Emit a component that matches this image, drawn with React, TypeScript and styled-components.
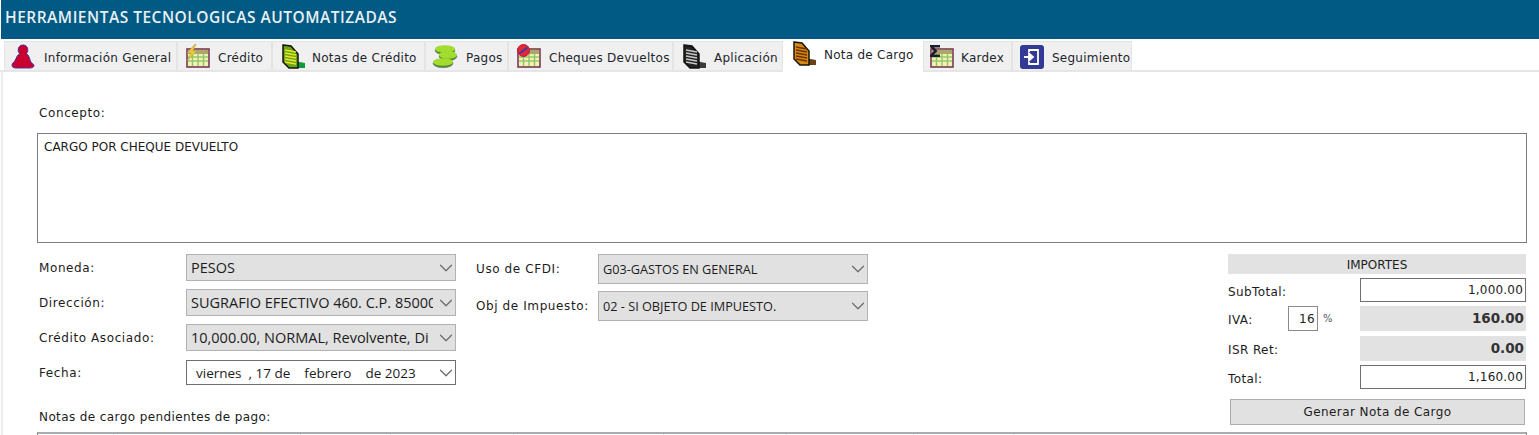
import React from "react";
import styled, { createGlobalStyle } from "styled-components";
import { ChevronDown } from "lucide-react";

const Global = createGlobalStyle`
  html, body { margin: 0; padding: 0; height: 435px; overflow: hidden; background: #fff; }
  #root { height: 435px; overflow: hidden; }
  * { box-sizing: border-box; }
`;

const FONT = `"DejaVu Sans", Tahoma, sans-serif`;

const Page = styled.div`
  width: 1539px;
  height: 435px;
  overflow: hidden;
  background: #fff;
  font-family: ${FONT};
  font-size: 12px;
  letter-spacing: 0.4px;
  color: #1c1c1c;
`;
const Header = styled.header`
  height: 39px;
  margin-left: 1px;
  background: #005a84;
  color: #e8f0f3;
  font-size: 15.5px;
  font-weight: 600;
  font-family: "Open Sans", sans-serif;
  letter-spacing: 0.5px;
  line-height: 35px;
  padding-left: 4px;
`;
const TabStrip = styled.nav`
  display: flex;
  align-items: flex-end;
  height: 33px;
  padding-left: 4px;
  border-bottom: 2px solid #e6e6e6;
`;
const Tab = styled.div<{ $w: number; $active?: boolean; $pad: number }>`
  display: flex;
  align-items: center;
  flex: none;
  width: ${(p) => p.$w}px;
  height: ${(p) => (p.$active ? 33 : 29)}px;
  margin-bottom: ${(p) => (p.$active ? -2 : 0)}px;
  padding-bottom: ${(p) => (p.$active ? 4 : 0)}px;
  padding-left: ${(p) => p.$pad}px;
  background: ${(p) => (p.$active ? "#fff" : "#f0f0f0")};
  border: 1px solid #e4e4e4;
  border-width: ${(p) => (p.$active ? "0" : "1px 1px 0 1px")};
  white-space: nowrap;
  color: #22262c;
  letter-spacing: 0.25px;
  svg { flex: none; }
`;
const TabLabel = styled.span<{ $gap: number }>`
  margin-left: ${(p) => p.$gap}px;
  padding-top: 3px;
`;
const Content = styled.main`
  height: 364px;
  margin-left: 1px;
  padding: 33px 12px 0 34px;
  border-left: 2px solid #ececec;
  margin-top: -1px;
`;
const FieldLabel = styled.label`
  display: block;
  padding-left: 2px;
  line-height: 18px;
  letter-spacing: 0.6px;
`;
const ConceptArea = styled.div`
  height: 110px;
  margin-top: 11px;
  padding: 5px 6px;
  border: 1px solid #7c7c7c;
  line-height: 16px;
  letter-spacing: 0;
`;
const Form = styled.section`
  display: flex;
  align-items: flex-start;
  margin-top: 11px;
  height: 178px;
`;
const LeftBlock = styled.div`
  display: flex;
  flex-direction: column;
  width: 831px;
`;
const Columns = styled.div`
  display: flex;
  gap: 18px;
`;
const Col = styled.div<{ $w: number }>`
  display: flex;
  flex-direction: column;
  width: ${(p) => p.$w}px;
`;
const FieldRow = styled.div<{ $h: number; $mt: number; $labelW: number }>`
  display: grid;
  grid-template-columns: ${(p) => p.$labelW}px 1fr;
  align-items: center;
  height: ${(p) => p.$h}px;
  margin-top: ${(p) => p.$mt}px;
`;
const Select = styled.div<{ $white?: boolean }>`
  display: flex;
  align-items: center;
  height: 100%;
  padding: 0 0 0 ${(p) => (p.$white ? 9 : 4)}px;
  background: ${(p) => (p.$white ? "#fff" : "#e1e1e1")};
  border: 1px solid ${(p) => (p.$white ? "#6f6f6f" : "#adb3b7")};
  min-width: 0;
  font-family: "Open Sans", sans-serif;
  letter-spacing: 0;
`;
const SelectText = styled.span<{ $size: number }>`
  flex: 1;
  min-width: 0;
  overflow: hidden;
  white-space: pre;
  font-size: ${(p) => p.$size}px;
`;
const Arrow = styled(ChevronDown)`
  flex: none;
  width: 22px;
  height: 22px;
  margin: 0 -2px 0 2px;
  color: #6a6a6a;
  stroke-width: 1.3;
`;
const NotesLabel = styled(FieldLabel)`
  margin-top: 23px;
  letter-spacing: 0.4px;
`;
const Totals = styled.aside`
  display: flex;
  flex-direction: column;
  width: 298px;
  margin-left: auto;
  margin-right: 1px;
`;
const TotalsTitle = styled.div`
  height: 20px;
  background: #e2e2e2;
  text-align: center;
  line-height: 22px;
  letter-spacing: 0;
`;
const TotalRow = styled.div<{ $mt: number; $h: number }>`
  display: flex;
  align-items: center;
  height: ${(p) => p.$h}px;
  margin-top: ${(p) => p.$mt}px;
`;
const TotalLabel = styled.span<{ $w?: number }>`
  width: ${(p) => p.$w ?? 132}px;
  padding-top: 3px;
`;
const Amount = styled.div<{ $bold?: boolean }>`
  width: 166px;
  height: 100%;
  margin-left: auto;
  padding: 0 2px 1px 0;
  display: flex;
  align-items: center;
  justify-content: flex-end;
  background: ${(p) => (p.$bold ? "#e2e2e2" : "#fff")};
  border: ${(p) => (p.$bold ? "none" : "1px solid #6f6f6f")};
  font-weight: ${(p) => (p.$bold ? 700 : 400)};
  font-size: ${(p) => (p.$bold ? 13.5 : 12)}px;
  letter-spacing: ${(p) => (p.$bold ? 0 : 0.2)}px;
  color: ${(p) => (p.$bold ? "#333" : "#1c1c1c")};
`;
const RateBox = styled.div`
  width: 30px;
  height: 100%;
  padding-right: 2px;
  display: flex;
  align-items: center;
  justify-content: flex-end;
  border: 1px solid #8a8a8a;
`;
const Percent = styled.span`
  margin-left: 5px;
  font-size: 10px;
  color: #555;
`;
const GenerateButton = styled.button`
  width: 295px;
  height: 26px;
  margin: 10px 0 0 2px;
  background: #e1e1e1;
  border: 1px solid #adadad;
  color: #1c1c1c;
  font: inherit;
  letter-spacing: 0.43px;
  padding: 0;
`;
const TableHead = styled.div`
  display: flex;
  height: 10px;
  width: 1490px;
  border-top: 2px solid #a9adb0;
  border-left: 1px solid #7c7c7c;
  border-right: 1px solid #7c7c7c;
`;
const HeadCell = styled.div<{ $w: number }>`
  width: ${(p) => p.$w}px;
  flex: none;
  border-right: 1px solid #dcdcdc;
`;

const I = ({ children, w = 25 }: { children: React.ReactNode; w?: number }) => (
  <svg width={w} height={25} viewBox={`0 0 ${w} 25`}>{children}</svg>
);

const Grid = () => (
  <>
    <rect x="2" y="5" width="22" height="18" fill="#f3f1b4" stroke="#7a3a55" strokeWidth="1.6" />
    <rect x="3" y="6" width="20" height="4" fill="#a9a868" />
    {[7.5, 13, 18.5].map((d) => <path key={d} d={`M${d} 10v12`} stroke="#8fc46a" strokeWidth="1.4" />)}
    {[13, 17].map((d) => <path key={d} d={`M3 ${d}h20`} stroke="#8fc46a" strokeWidth="1.4" />)}
  </>
);

const SlantDoc = ({ fill, line, foot }: { fill: string; line: string; foot: string }) => (
  <>
    <path d="M13 17l11 2v5H11z" fill={foot} />
    <path d="M2 1 10 2 17 10 17 24 8 24 2 18z" fill={fill} stroke="#15130f" strokeWidth="1.5" />
    {[6, 9, 12, 15, 18].map((y) => (
      <path key={y} d={`M4 ${y} 15 ${y + 2}`} stroke={line} strokeWidth="1.4" />
    ))}
  </>
);

const Coin = ({ cx, cy, rx }: { cx: number; cy: number; rx: number }) => (
  <>
    <ellipse cx={cx} cy={cy + 1.5} rx={rx} ry="4.2" fill="#4f8a1c" stroke="#7a7ab0" strokeWidth="0.6" />
    <ellipse cx={cx} cy={cy} rx={rx} ry="3.8" fill="#a2dc2e" />
  </>
);

const icons: Record<string, React.ReactNode> = {
  person: (
    <I>
      <path d="M12 1c3.200 0 4.800 2.300 4.800 5 0 2-.8 3-1.600 3.800 3.400 1 3.400 6 4.600 8.200 1.200 1.700 3.200 2 3.200 3.600 0 1.600-2 2.400-4 2.400H5c-3 0-4-1.200-4-3 0-1.800 2-2.500 3-4.500C5.500 14 6 11 8.800 9.800 8 9 7.200 8 7.200 6 7.200 3.300 8.800 1 12 1z" fill="#c9002f" stroke="#3d2a9a" strokeWidth="0.9" />
    </I>
  ),
  credit: (
    <I>
      <Grid />
      <path d="M10 0 2 9h4l-4 8 10-10H8l3-7z" fill="#f0c828" stroke="#9a9a80" strokeWidth="0.5" />
    </I>
  ),
  notes: (
    <I>
      <SlantDoc fill="#6aa518" line="#e7e62a" foot="#0f9a3c" />
    </I>
  ),
  pagos: (
    <I w={27}>
      <Coin cx={13} cy={5} rx={10} />
      <Coin cx={16} cy={11} rx={9} />
      <Coin cx={11} cy={18} rx={10} />
    </I>
  ),
  cheques: (
    <I>
      <Grid />
      <circle cx="7.500" cy="6.500" r="6" fill="#e02a3c" stroke="#c01a30" />
      <path d="M3.500 9.500 11.500 3.500" stroke="#3a3aa8" strokeWidth="1.800" />
    </I>
  ),
  aplicacion: (
    <I>
      <SlantDoc fill="#222" line="#c8c8c8" foot="#3c3c3c" />
    </I>
  ),
  cargo: (
    <I>
      <SlantDoc fill="#d88a10" line="#6a3208" foot="#6a4018" />
    </I>
  ),
  kardex: (
    <I>
      <Grid />
      <path d="M1 1h10v2.500H5l3.500 3.500L5 10.500h6V13H1v-2l4-4-4-4z" fill="#1c1c2c" />
    </I>
  ),
  seguimiento: (
    <I w={26}>
      <rect x="1" y="1" width="24" height="24" rx="3" fill="#333a96" />
      <path d="M10 8V6h9v14h-9v-2" fill="none" stroke="#fff" strokeWidth="1.800" />
      <path d="M5 13h8M10 9.500 14 13l-4 3.500z" fill="#fff" stroke="#fff" strokeWidth="1.800" />
    </I>
  ),
};

const tabs = [
  { t: "Información General", w: 173, i: "person", pad: 6, gap: 8 },
  { t: "Crédito", w: 95, i: "credit", pad: 7, gap: 8 },
  { t: "Notas de Crédito", w: 153, i: "notes", pad: 8, gap: 6 },
  { t: "Pagos", w: 83, i: "pagos", pad: 6, gap: 7 },
  { t: "Cheques Devueltos", w: 165, i: "cheques", pad: 7, gap: 8 },
  { t: "Aplicación", w: 110, i: "aplicacion", pad: 8, gap: 7 },
  { t: "Nota de Cargo", w: 140, i: "cargo", pad: 9, gap: 7, active: true },
  { t: "Kardex", w: 89, i: "kardex", pad: 5, gap: 7 },
  { t: "Seguimiento", w: 120, i: "seguimiento", pad: 6, gap: 7 },
];

const headCols = [76, 187, 90, 123, 150, 123, 127, 100];

const Choice = ({ text, white, size = 14.5 }: { text: string; white?: boolean; size?: number }) => (
  <Select $white={white}>
    <SelectText $size={size}>{text}</SelectText>
    <Arrow />
  </Select>
);

export default function App() {
  return (
    <Page>
      <Global />
      <Header>HERRAMIENTAS TECNOLOGICAS AUTOMATIZADAS</Header>
      <TabStrip>
        {tabs.map((tab) => (
          <Tab key={tab.t} $w={tab.w} $pad={tab.pad} $active={tab.active}>
            {icons[tab.i]}
            <TabLabel $gap={tab.gap}>{tab.t}</TabLabel>
          </Tab>
        ))}
      </TabStrip>
      <Content>
        <FieldLabel>Concepto:</FieldLabel>
        <ConceptArea>CARGO POR CHEQUE DEVUELTO</ConceptArea>
        <Form>
          <LeftBlock>
            <Columns>
              <Col $w={419}>
                <FieldRow $h={27} $mt={0} $labelW={149}>
                  <FieldLabel>Moneda:</FieldLabel>
                  <Choice text="PESOS" />
                </FieldRow>
                <FieldRow $h={27} $mt={8} $labelW={149}>
                  <FieldLabel>Dirección:</FieldLabel>
                  <Choice text="SUGRAFIO EFECTIVO 460. C.P. 85000" />
                </FieldRow>
                <FieldRow $h={27} $mt={8} $labelW={149}>
                  <FieldLabel>Crédito Asociado:</FieldLabel>
                  <Choice text="10,000.00, NORMAL, Revolvente, Di" />
                </FieldRow>
                <FieldRow $h={25} $mt={9} $labelW={149}>
                  <FieldLabel>Fecha:</FieldLabel>
                  <Choice white size={13.5} text="viernes  , 17 de    febrero    de 2023" />
                </FieldRow>
              </Col>
              <Col $w={394}>
                <FieldRow $h={30} $mt={0} $labelW={124}>
                  <FieldLabel>Uso de CFDI:</FieldLabel>
                  <Choice size={12.7} text="G03-GASTOS EN GENERAL" />
                </FieldRow>
                <FieldRow $h={30} $mt={7} $labelW={124}>
                  <FieldLabel>Obj de Impuesto:</FieldLabel>
                  <Choice size={12.7} text="02 - SI OBJETO DE IMPUESTO." />
                </FieldRow>
              </Col>
            </Columns>
            <NotesLabel>Notas de cargo pendientes de pago:</NotesLabel>
          </LeftBlock>
          <Totals>
            <TotalsTitle>IMPORTES</TotalsTitle>
            <TotalRow $mt={4} $h={24}>
              <TotalLabel>SubTotal:</TotalLabel>
              <Amount>1,000.00</Amount>
            </TotalRow>
            <TotalRow $mt={4} $h={25}>
              <TotalLabel $w={60}>IVA:</TotalLabel>
              <RateBox>16</RateBox>
              <Percent>%</Percent>
              <Amount $bold>160.00</Amount>
            </TotalRow>
            <TotalRow $mt={5} $h={25}>
              <TotalLabel>ISR Ret:</TotalLabel>
              <Amount $bold>0.00</Amount>
            </TotalRow>
            <TotalRow $mt={4} $h={24}>
              <TotalLabel>Total:</TotalLabel>
              <Amount>1,160.00</Amount>
            </TotalRow>
            <GenerateButton>Generar Nota de Cargo</GenerateButton>
          </Totals>
        </Form>
        <TableHead>
          {headCols.map((w, i) => <HeadCell key={i} $w={w} />)}
        </TableHead>
      </Content>
    </Page>
  );
}
